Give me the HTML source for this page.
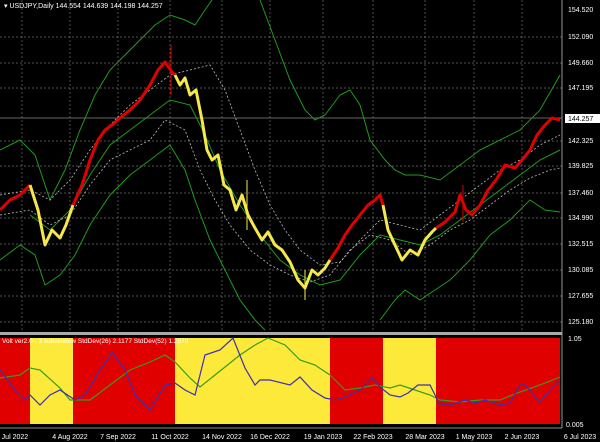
<!DOCTYPE html>
<html><head><style>
html,body{margin:0;padding:0;background:#000;width:600px;height:442px;overflow:hidden}
svg{display:block;font-family:"Liberation Sans",sans-serif}
</style></head><body>
<svg width="600" height="442" viewBox="0 0 600 442">
<rect width="600" height="442" fill="#000"/>
<!-- grid -->
<g stroke="#6e6e6e" stroke-width="0.7" stroke-dasharray="2,2">
<line x1="0" y1="37" x2="562" y2="37"/><line x1="0" y1="63" x2="562" y2="63"/><line x1="0" y1="88" x2="562" y2="88"/>
<line x1="0" y1="141" x2="562" y2="141"/><line x1="0" y1="166" x2="562" y2="166"/><line x1="0" y1="193" x2="562" y2="193"/>
<line x1="0" y1="218" x2="562" y2="218"/><line x1="0" y1="244" x2="562" y2="244"/><line x1="0" y1="270" x2="562" y2="270"/>
<line x1="0" y1="296" x2="562" y2="296"/><line x1="0" y1="322" x2="562" y2="322"/>
<line x1="22" y1="0" x2="22" y2="331"/><line x1="70" y1="0" x2="70" y2="331"/><line x1="118" y1="0" x2="118" y2="331"/>
<line x1="170" y1="0" x2="170" y2="331"/><line x1="222" y1="0" x2="222" y2="331"/><line x1="270" y1="0" x2="270" y2="331"/>
<line x1="323" y1="0" x2="323" y2="331"/><line x1="373" y1="0" x2="373" y2="331"/><line x1="425" y1="0" x2="425" y2="331"/>
<line x1="474" y1="0" x2="474" y2="331"/><line x1="522" y1="0" x2="522" y2="331"/>
</g>
<line x1="0" y1="118" x2="562" y2="118" stroke="#888" stroke-width="0.8"/>
<!-- bands -->
<g fill="none" stroke="#1f9a1f" stroke-width="1">
<polyline points="0,150 20,140 35,155 50,200 65,170 80,130 95,95 110,70 125,55 140,40 155,25 170,15 185,20 195,25 205,10 212,0"/>
<polyline points="260,0 275,40 290,80 305,110 315,120 325,115 340,95 350,90 360,105 370,140 385,160 395,170 405,175 420,175 440,180 460,165 480,150 500,140 520,130 540,110 560,75"/>
<polyline points="0,260 20,245 35,255 45,285 60,275 75,255 90,225 110,195 130,175 150,160 170,145 185,170 195,200 210,240 225,270 240,300 255,320 265,330"/>
<polyline points="380,320 395,300 405,290 420,300 435,290 450,280 470,260 490,235 510,220 530,200 545,210 560,212"/>
<polyline points="30,215 50,230 70,210 90,175 110,145 130,130 150,115 170,100 190,105 205,135 220,170 240,205 260,235 280,260 300,275 320,285 340,280 360,255 380,235 400,240 420,245 440,235 460,220 480,205 500,190 520,175 540,160 560,150"/>
</g>
<g fill="none" stroke="#bbb" stroke-width="0.8" stroke-dasharray="2,2">
<polyline points="0,195 30,190 50,200 70,180 90,150 110,125 130,105 150,90 170,75 190,70 210,65 225,90 240,130 255,170 270,205 285,230 300,250 320,265 340,262 360,240 380,220 400,225 420,230 440,215 460,200 480,185 500,170 520,160 540,145 560,135"/>
<polyline points="0,215 30,210 50,225 70,215 90,185 110,160 130,150 150,140 165,120 185,130 200,170 215,200 230,225 250,250 270,265 290,275 310,282 330,275 350,250 370,235 390,240 410,255 430,245 450,230 470,220 490,205 510,190 530,178 550,170 560,168"/>
</g>
<!-- price -->
<g fill="none" stroke-width="3" stroke-linejoin="round">
<polyline stroke="#e00000" points="0,210 10,200 20,195 30,185"/>
<polyline stroke="#f5e84a" points="30,185 38,210 45,245 52,230 60,238 66,225 73,205"/>
<polyline stroke="#e00000" points="73,205 82,185 90,160 98,140 105,130 112,125 120,118 130,110 140,100 150,85 158,70 165,62 172,72 175,75"/>
<polyline stroke="#f5e84a" points="175,75 180,85 185,78 190,95 196,90 202,120 207,150 212,160 218,155 224,185 230,190 236,210 242,195 248,215 255,228 262,240 268,232 275,245 282,250 290,262 298,280 305,288 312,270 318,275 325,268 330,260"/>
<polyline stroke="#e00000" points="330,260 338,248 345,235 352,225 360,215 368,205 375,200 380,195 383,205"/>
<polyline stroke="#f5e84a" points="383,205 388,230 395,245 402,260 410,250 418,255 425,240 432,232 436,228"/>
<polyline stroke="#e00000" points="436,228 445,222 455,212 460,195 466,210 472,215 480,205 488,190 496,180 505,165 515,168 522,160 530,150 537,135 545,125 552,118 560,120"/>
</g>
<g stroke-width="1">
<line x1="171" y1="45" x2="171" y2="95" stroke="#e00000"/><line x1="247" y1="180" x2="247" y2="230" stroke="#f5e84a"/>
<line x1="463" y1="185" x2="463" y2="222" stroke="#e00000"/><line x1="305" y1="270" x2="305" y2="300" stroke="#f5e84a"/>
</g>
<text x="4" y="8" fill="#fff" font-size="7">▾ USDJPY,Daily  144.554 144.639 144.198 144.257</text>
<!-- axis -->
<line x1="562" y1="0" x2="562" y2="428" stroke="#bbb" stroke-width="0.8"/>
<g fill="#fff" font-size="7">
<text x="568" y="12">154.520</text><text x="568" y="39">152.090</text><text x="568" y="65">149.660</text>
<text x="568" y="90">147.195</text><text x="568" y="143">142.325</text><text x="568" y="168">139.825</text>
<text x="568" y="195">137.460</text><text x="568" y="220">134.990</text><text x="568" y="246">132.515</text>
<text x="568" y="272">130.085</text><text x="568" y="298">127.655</text><text x="568" y="324">125.180</text>
</g>
<rect x="565" y="114" width="35" height="9" fill="#fff"/><text x="568" y="121" fill="#000" font-size="7">144.257</text>
<!-- separator -->
<rect x="0" y="332" width="562" height="3" fill="#aaa"/>
<!-- indicator -->
<rect x="0" y="338" width="30" height="86" fill="#e00000"/>
<rect x="30" y="338" width="43" height="86" fill="#fde93a"/>
<rect x="73" y="338" width="102" height="86" fill="#e00000"/>
<rect x="175" y="338" width="155" height="86" fill="#fde93a"/>
<rect x="330" y="338" width="53" height="86" fill="#e00000"/>
<rect x="383" y="338" width="53" height="86" fill="#fde93a"/>
<rect x="436" y="338" width="124" height="86" fill="#e00000"/>
<polyline fill="none" stroke="#3a9a1a" stroke-width="1.2" points="0,378 20,375 30,368 40,370 60,388 70,400 90,400 110,385 130,370 150,362 165,355 175,362 190,378 200,387 215,375 240,355 255,345 268,338 285,345 300,360 315,365 330,375 345,390 360,388 375,385 390,388 400,385 415,390 430,395 440,400 460,402 480,400 500,400 520,392 540,385 560,377"/>
<polyline fill="none" stroke="#3a2fb0" stroke-width="1.2" points="0,370 15,390 25,400 30,395 40,405 50,395 60,390 75,400 85,395 100,370 112,352 125,370 135,395 150,410 165,385 175,383 185,390 195,395 205,355 220,350 233,338 245,368 255,385 260,380 270,380 290,385 300,377 312,390 325,398 335,400 345,397 360,390 372,378 380,387 390,395 400,397 408,393 418,385 430,385 440,405 450,405 465,400 475,403 485,400 500,405 510,403 520,385 525,385 540,402 550,390 560,380"/>
<text x="2" y="343" fill="#fff" font-size="6.5">Volt ver2.0 - 3 subwindow  StdDev(26) 2.1177  StdDev(52) 1.2070</text>
<g fill="#fff" font-size="7"><text x="568" y="341">1.05</text><text x="566" y="427">0.005</text></g>
<!-- date axis -->
<line x1="0" y1="428" x2="562" y2="428" stroke="#bbb" stroke-width="0.8"/>
<g fill="#fff" font-size="7" text-anchor="middle">
<text x="12" y="439">1 Jul 2022</text><text x="70" y="439">4 Aug 2022</text><text x="118" y="439">7 Sep 2022</text>
<text x="170" y="439">11 Oct 2022</text><text x="222" y="439">14 Nov 2022</text><text x="270" y="439">16 Dec 2022</text>
<text x="323" y="439">19 Jan 2023</text><text x="373" y="439">22 Feb 2023</text><text x="425" y="439">28 Mar 2023</text>
<text x="474" y="439">1 May 2023</text><text x="522" y="439">2 Jun 2023</text><text x="580" y="439">6 Jul 2023</text>
</g>
</svg>
</body></html>
